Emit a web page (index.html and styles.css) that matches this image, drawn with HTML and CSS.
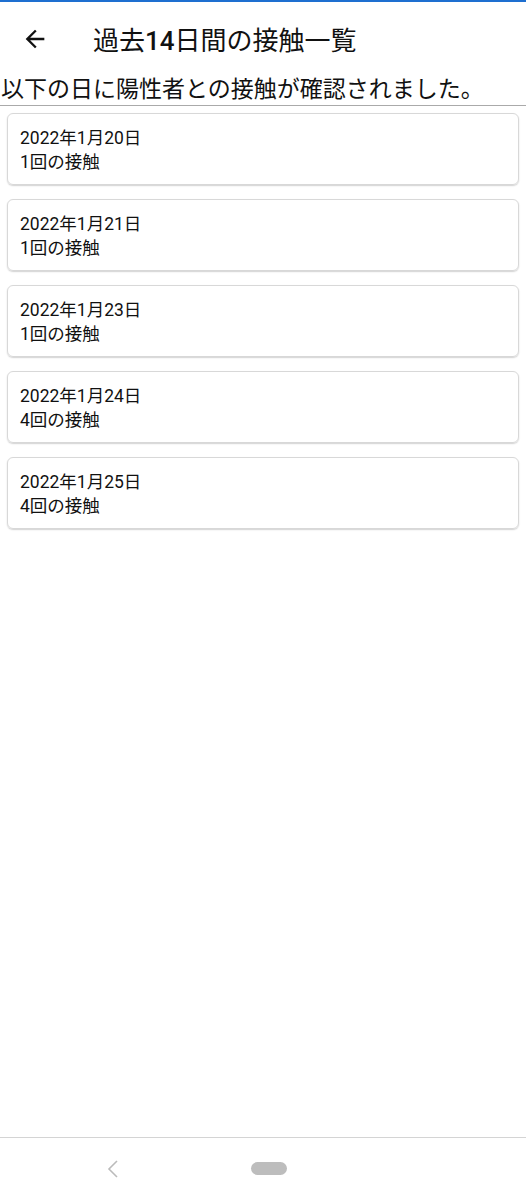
FILE: index.html
```html
<!DOCTYPE html>
<html>
  <head>
    <title>過去14日間の接触一覧</title>
    <link rel="stylesheet" href="styles.css">
  </head>
  <body>
    <div class="statusline"></div>
    <div class="toolbar">
      <svg class="back" width="28" height="28" viewBox="0 0 24 24">
        <path d="M20 11H7.83l5.59-5.59L12 4l-8 8 8 8 1.41-1.41L7.83 13H20v-2z" fill="#111"/>
      </svg>
      <h1>過去<b>14</b>日間の接触一覧</h1>
    </div>
    <p class="lead">以下の日に陽性者との接触が確認されました。</p>
    <div class="list">
      <div class="card">
        <div>2022年1月20日</div>
        <div>1回の接触</div>
      </div>
      <div class="card">
        <div>2022年1月21日</div>
        <div>1回の接触</div>
      </div>
      <div class="card">
        <div>2022年1月23日</div>
        <div>1回の接触</div>
      </div>
      <div class="card">
        <div>2022年1月24日</div>
        <div>4回の接触</div>
      </div>
      <div class="card">
        <div>2022年1月25日</div>
        <div>4回の接触</div>
      </div>
    </div>
    <div class="navbar">
      <svg class="nav-back" width="14" height="20" viewBox="0 0 14 20">
        <path d="M11 2L3 10l8 8" fill="none" stroke="#bbb" stroke-width="1.6"/>
      </svg>
      <div class="pill"></div>
    </div>
  </body>
</html>
```

FILE: styles.css
```css
body {
  margin: 0;
  background-color: #fff;
  color: #111;
  font-family: Roboto, "Noto Sans CJK JP", sans-serif;
  height: 1200px;
  display: flex;
  flex-direction: column;
}

.statusline {
  height: 2px;
  background-color: #1e6fd0;
}

.toolbar {
  height: 74px;
  display: flex;
  align-items: center;
  padding-left: 21px;
  box-sizing: border-box;
  padding-bottom: 1px;
}

.toolbar h1 {
  margin: 0 0 0 44px;
  font-size: 26px;
  font-weight: 400;
  color: #111;
}

.toolbar h1 b {
  font-weight: 500;
}

.lead {
  margin: 0;
  padding: 0 0 1px 1px;
  font-size: 23px;
  line-height: 28px;
  border-bottom: 1px solid #aaa;
}

.list {
  display: flex;
  flex-direction: column;
  gap: 14px;
  padding: 7px 7px 0 7px;
  flex: 1;
}

.card {
  border: 1px solid #d8d8d8;
  border-radius: 6px;
  box-shadow: 0 1px 1.5px rgba(0, 0, 0, 0.18);
  height: 72px;
  box-sizing: border-box;
  padding: 12px 12px 0 12px;
  font-size: 17.5px;
  line-height: 24px;
}

.navbar {
  height: 61px;
  border-top: 1.5px solid #d4d4d4;
  display: flex;
  align-items: center;
  padding-left: 106px;
  padding-bottom: 1px;
}

.pill {
  width: 36px;
  height: 13px;
  border-radius: 7px;
  background-color: #bdbdbd;
  margin-left: 131px;
}
```
